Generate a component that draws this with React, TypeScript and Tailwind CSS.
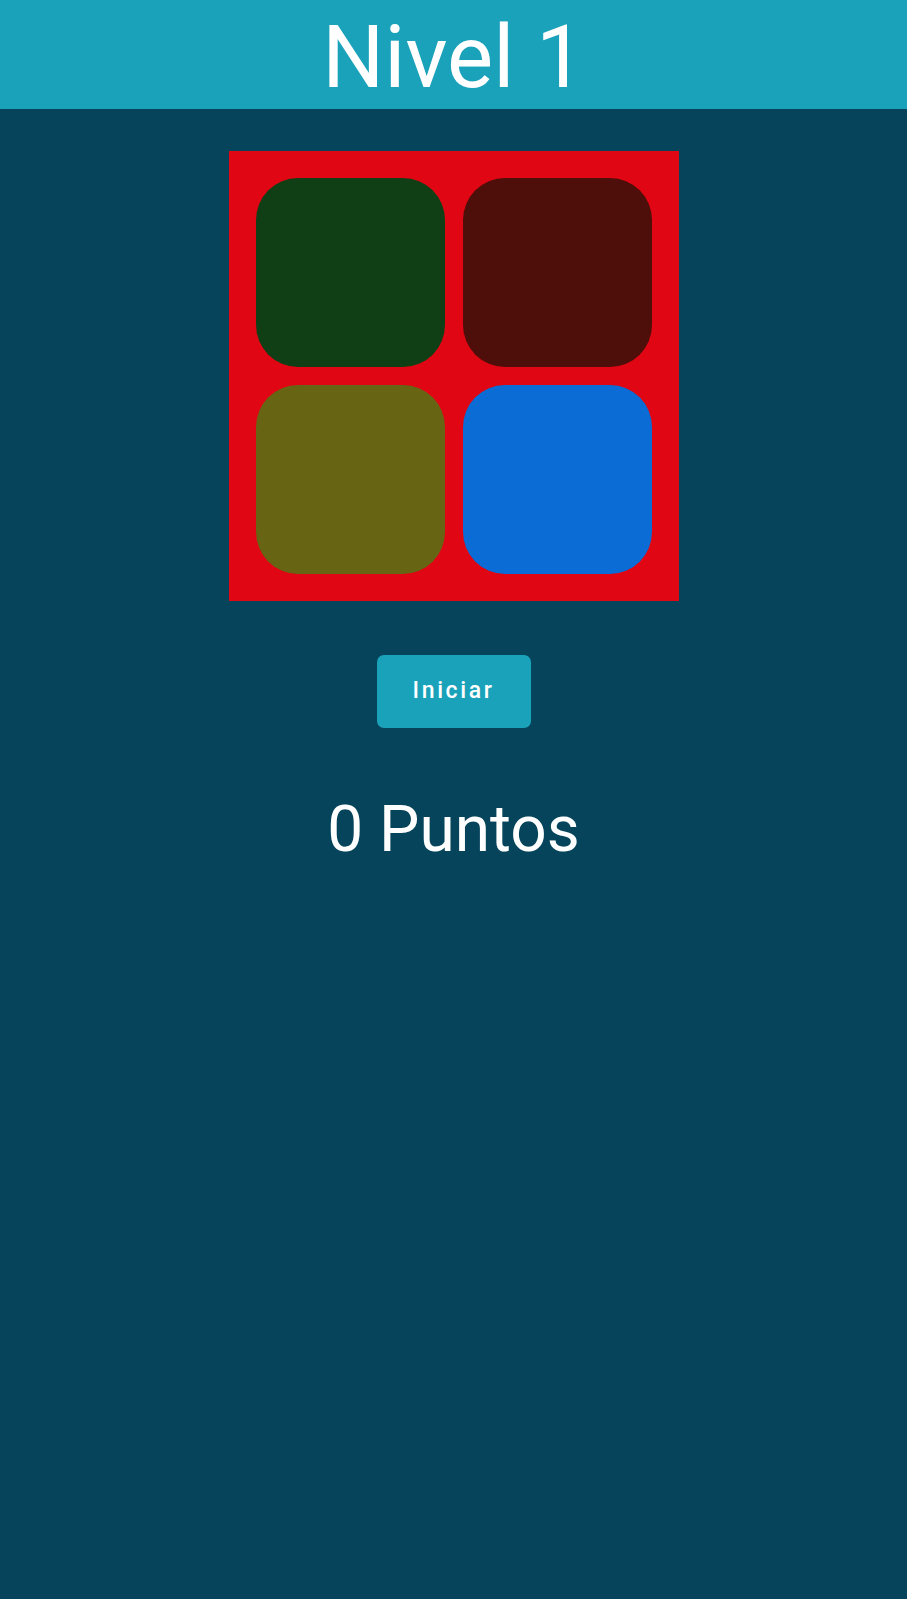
import React from "react";

export default function App() {
  const font = { fontFamily: "Roboto, 'Noto Sans', sans-serif" };
  return (
    <div className="min-h-[1599px] w-full bg-[#05445a] flex flex-col items-center" style={font}>
      <div className="w-full h-[109px] bg-[#1aa2ba] flex items-center justify-center pt-[5px]">
        <span className="text-white text-[87px] leading-none font-normal">Nivel 1</span>
      </div>
      <div className="mt-[42px] w-[450px] h-[450px] bg-[#e10613] p-[27px] grid grid-cols-2 grid-rows-2 gap-[18px]">
        <div className="bg-[#103f15] rounded-[42px]" />
        <div className="bg-[#4e0e09] rounded-[42px]" />
        <div className="bg-[#676414] rounded-[42px]" />
        <div className="bg-[#0a6cd4] rounded-[42px]" />
      </div>
      <button className="mt-[54px] w-[154px] h-[73px] bg-[#1aa2ba] rounded-[7px] text-white text-[23px] font-medium tracking-[2.6px] flex items-center justify-center">
        Iniciar
      </button>
      <div className="mt-[70px] text-white text-[64px] leading-none font-normal">0 Puntos</div>
    </div>
  );
}
